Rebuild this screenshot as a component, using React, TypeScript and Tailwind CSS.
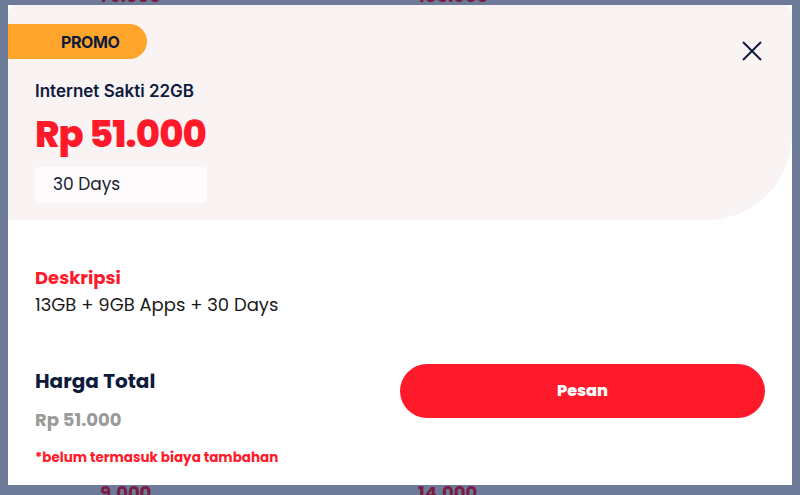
import React from "react";

function PriceRow({ a, b }: { a: string; b: string }) {
  return (
    <div className="flex pl-[100px] text-[18px] leading-[20px] font-bold text-[#7a1b43]">
      <div className="w-[318px]">{a}</div>
      <div>{b}</div>
    </div>
  );
}

export default function App() {
  const font = { fontFamily: "Poppins, 'Open Sans', Inter, sans-serif" };
  return (
    <div className="relative w-[800px] h-[495px] overflow-hidden bg-[#6e7b98]" style={font}>
      {/* page content behind overlay */}
      <div className="h-[517px] flex flex-col justify-between mt-[-14px]">
        <PriceRow a="79.000" b="105.000" />
        <PriceRow a="9.000" b="14.000" />
      </div>

      {/* modal */}
      <div className="absolute left-[8px] top-[5px] w-[784px] h-[480px] bg-white flex flex-col">
        <div className="relative h-[215px] bg-[#f9f3f4] rounded-t-[8px] rounded-br-[85px] pt-[19px]">
          <div className="w-[139px] h-[35px] bg-[#ffa52b] rounded-r-full flex items-center pl-[53px]">
            <span className="text-[16px] font-bold text-[#0f1b3d] tracking-tight" style={{ fontFamily: "Inter, sans-serif" }}>PROMO</span>
          </div>
          <button className="absolute right-[30px] top-[36px] w-[20px] h-[20px] text-[#0f1b3d]">
            <svg viewBox="0 0 20 20" width="20" height="20" fill="none" stroke="currentColor" strokeWidth="2">
              <path d="M1 1 L19 19 M19 1 L1 19" />
            </svg>
          </button>
          <div className="pl-[27px] mt-[20px]">
            <div className="text-[17px] leading-[24px] font-semibold text-[#0f1b3d]" style={{ fontFamily: "Inter, sans-serif" }}>Internet Sakti 22GB</div>
            <div className="mt-[9px] text-[37px] leading-[44px] font-extrabold text-[#ff1a2b] tracking-tight">Rp 51.000</div>
            <div className="mt-[11px] w-[172px] h-[36px] bg-[#fdfbfc] rounded-[4px] flex items-center pl-[18px] text-[17px] text-[#1c2233]">30 Days</div>
          </div>
        </div>

        <div className="pl-[27px] pt-[45px]">
          <div className="text-[18px] leading-[26px] font-bold text-[#ff1a2b]">Deskripsi</div>
          <div className="mt-[1px] text-[18px] leading-[26px] text-[#1a1a1a]">13GB + 9GB Apps + 30 Days</div>
        </div>

        <div className="flex pl-[27px] pr-[27px] mt-[49px]">
          <div className="flex-1">
            <div className="text-[20px] leading-[28px] font-bold text-[#0f1b3d]">Harga Total</div>
            <div className="mt-[13px] text-[18px] leading-[24px] font-bold text-[#9a9a9a]">Rp 51.000</div>
            <div className="mt-[16px] text-[13.5px] leading-[20px] font-bold text-[#ff1a2b]">*belum termasuk biaya tambahan</div>
          </div>
          <button className="w-[365px] h-[54px] mt-[-3px] bg-[#ff1a2b] rounded-full text-white text-[16px] font-extrabold">Pesan</button>
        </div>
      </div>
    </div>
  );
}
